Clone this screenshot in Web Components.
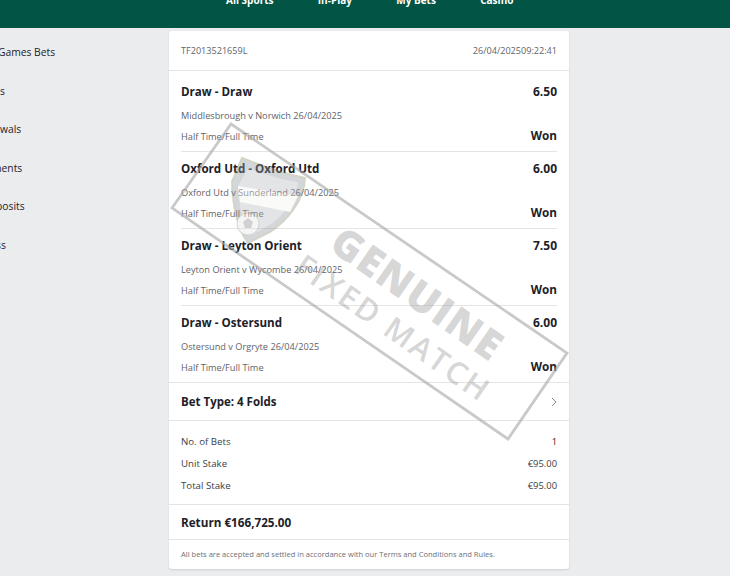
<!DOCTYPE html>
<html><head><meta charset="utf-8"><style>
html,body{margin:0;padding:0;height:576px;overflow:hidden;background:#ebecee;font-family:"Open Sans","Noto Sans",sans-serif;color:#1d2129}
</style></head><body>
<template id="t-header"><style>
:host{display:block;height:28px;background:#025544;overflow:hidden;color:#fff;font-weight:700;font-size:10px;line-height:14px}
.n{display:flex;gap:44.3px;margin-top:-7px;padding-left:226px}
</style><div class="n"><slot></slot></div></template>
<template id="t-side"><style>
:host{display:flex;flex-direction:column;width:169px;flex:none;overflow:hidden;font-size:10.3px;color:#1d2129;padding-top:16px;box-sizing:border-box}
::slotted(div){height:38.5px;line-height:16px;white-space:nowrap;display:block}
</style><slot></slot></template>
<template id="t-card"><style>
:host{display:block;position:relative;width:400px;height:538px;margin-top:3px;background:#fff;border-radius:3px;box-shadow:0 1px 2px rgba(0,0,0,.12);flex:none}
</style><slot></slot></template>
<template id="t-leg"><style>
:host{display:block;height:77px;box-sizing:border-box;padding-top:9px;margin:0 12px;border-bottom:1px solid #e3e4e6;font-size:9.2px;color:#5f6369}
:host(:first-of-type){height:81px;padding-top:13px}
:host(:last-of-type){height:76px;border-bottom:0}
.r{display:flex;justify-content:space-between;align-items:center}
.a{height:16px;font-size:11.6px;font-weight:700;color:#1d2129;line-height:16px}
.o{font-size:12px}
.b{margin-top:9px;height:14px;line-height:14px}
.c{margin-top:6px;height:16px;line-height:16px}
.w{font-size:11.7px;font-weight:700;color:#1d2129;position:relative;top:-2px}
</style><div class="r a"><span><slot name="sel"></slot></span><span class="o"><slot name="odd"></slot></span></div>
<div class="b"><slot name="ev"></slot></div>
<div class="r c"><span>Half Time/Full Time</span><span class="w">Won</span></div></template>
<template id="t-row"><style>
:host{display:flex;justify-content:space-between;height:22px;align-items:center;font-size:9.7px;color:#3a3e45}
.v{font-size:9.4px}
</style><span><slot name="k"></slot></span><span class="v"><slot name="v"></slot></span></template>
<template id="t-stamp"><style>
:host{position:absolute;left:0;top:0;width:730px;height:576px;pointer-events:none;display:block}
svg{position:absolute;left:0;top:0}
.tx{position:absolute;font-family:"Open Sans",sans-serif;white-space:nowrap;transform-origin:0 0;line-height:1}
.g{left:348px;top:219px;font-size:41px;transform:rotate(35deg);font-weight:800;letter-spacing:1.5px;color:rgba(150,150,150,.4)}
.f{left:308px;top:249px;font-size:31px;transform:rotate(35deg);font-weight:600;letter-spacing:2.5px;color:rgba(150,150,150,.4)}
</style>
<svg width="730" height="576" viewBox="0 0 730 576">
<g opacity=".38">
<path d="M242 158 C262 166 284 174 305 178 C304 200 288 220 270 232 L248 243 C240 232 233 212 232 182 Z" fill="#8f979c" stroke="#8d9070" stroke-width="2"/>
<path d="M248 168 C264 174 282 180 298 182 C296 198 284 216 268 226 L250 236 C244 226 239 208 238 186 Z" fill="#b4babf"/>
<path d="M238 186 L298 196 L290 212 L240 202 Z" fill="#f4f4f0"/>
<circle cx="248" cy="224" r="11" fill="#e6e6e6" stroke="#777" stroke-width=".8"/>
<path d="M248 218l5 4-2 6h-6l-2-6z" fill="#888"/>
</g>
<polygon points="172,208 231,124 567,353 508,439" fill="none" stroke="#a5a5a5" stroke-opacity=".6" stroke-width="2.8"/>
</svg>
<div class="tx g">GENUINE</div><div class="tx f">FIXED MATCH</div></template>
<template id="t-page"><style>
:host{display:block;height:576px;position:relative}
.m{display:flex}
</style><slot name="h"></slot><div class="m"><slot></slot></div><slot name="o"></slot></template>

<x-page>
<x-header slot="h"><span>All Sports</span><span>In-Play</span><span>My Bets</span><span>Casino</span></x-header>
<x-side><div style="text-indent:-2px">Games Bets</div><div>s</div><div>wals</div><div style="text-indent:-8px">ments</div><div style="text-indent:-4px">posits</div><div style="text-indent:-4px">ss</div></x-side>
<x-card>
<x-bar><span>TF2013521659L</span><span>26/04/202509:22:41</span></x-bar>
<x-leg><span slot="sel">Draw - Draw</span><span slot="odd">6.50</span><span slot="ev">Middlesbrough v Norwich 26/04/2025</span></x-leg>
<x-leg><span slot="sel">Oxford Utd - Oxford Utd</span><span slot="odd">6.00</span><span slot="ev">Oxford Utd v Sunderland 26/04/2025</span></x-leg>
<x-leg><span slot="sel">Draw - Leyton Orient</span><span slot="odd">7.50</span><span slot="ev">Leyton Orient v Wycombe 26/04/2025</span></x-leg>
<x-leg><span slot="sel">Draw - Ostersund</span><span slot="odd">6.00</span><span slot="ev">Ostersund v Orgryte 26/04/2025</span></x-leg>
<x-type></x-type>
<x-summary>
<x-row><span slot="k">No. of Bets</span><span slot="v" style="color:#4a2226">1</span></x-row>
<x-row><span slot="k">Unit Stake</span><span slot="v">€95.00</span></x-row>
<x-row><span slot="k">Total Stake</span><span slot="v">€95.00</span></x-row>
</x-summary>
<x-return>Return €166,725.00</x-return>
<x-note>All bets are accepted and settled in accordance with our Terms and Conditions and Rules.</x-note>
</x-card></x-page>
<x-stamp></x-stamp>
<script>
function def(n,id,css,html){customElements.define(n,class extends HTMLElement{constructor(){super();const s=this.attachShadow({mode:'open'});
if(id)s.appendChild(document.getElementById(id).content.cloneNode(true));else s.innerHTML='<style>'+css+'</style>'+html;}});}
def('x-page','t-page');def('x-header','t-header');def('x-side','t-side');def('x-card','t-card');def('x-leg','t-leg');def('x-row','t-row');def('x-stamp','t-stamp');
def('x-bar',null,':host{display:flex;justify-content:space-between;align-items:center;height:39px;padding:0 12px;border-bottom:1px solid #e3e4e6;font-size:9.1px;color:#5f6369}','<slot></slot>');
def('x-type',null,':host{display:flex;justify-content:space-between;align-items:center;height:37px;padding:0 12px;border-top:1px solid #e3e4e6;border-bottom:1px solid #e3e4e6;font-size:11.5px;font-weight:700;color:#1d2129}svg{display:block}','<span>Bet Type: 4 Folds</span><svg width="6" height="10" viewBox="0 0 6 10"><path d="M1 1l4 4-4 4" fill="none" stroke="#8a8d91" stroke-width="1"/></svg>');
def('x-summary',null,':host{display:block;padding:9px 12px 8px;border-bottom:1px solid #e3e4e6}','<slot></slot>');
def('x-return',null,':host{display:flex;align-items:center;height:34px;padding:0 12px;border-bottom:1px solid #e3e4e6;font-size:11.7px;font-weight:700;color:#1d2129}','<slot></slot>');
def('x-note',null,':host{display:flex;align-items:center;height:27px;padding:0 12px 2px;font-size:7.55px;color:#6d7076}','<slot></slot>');
</script>
</body></html>
